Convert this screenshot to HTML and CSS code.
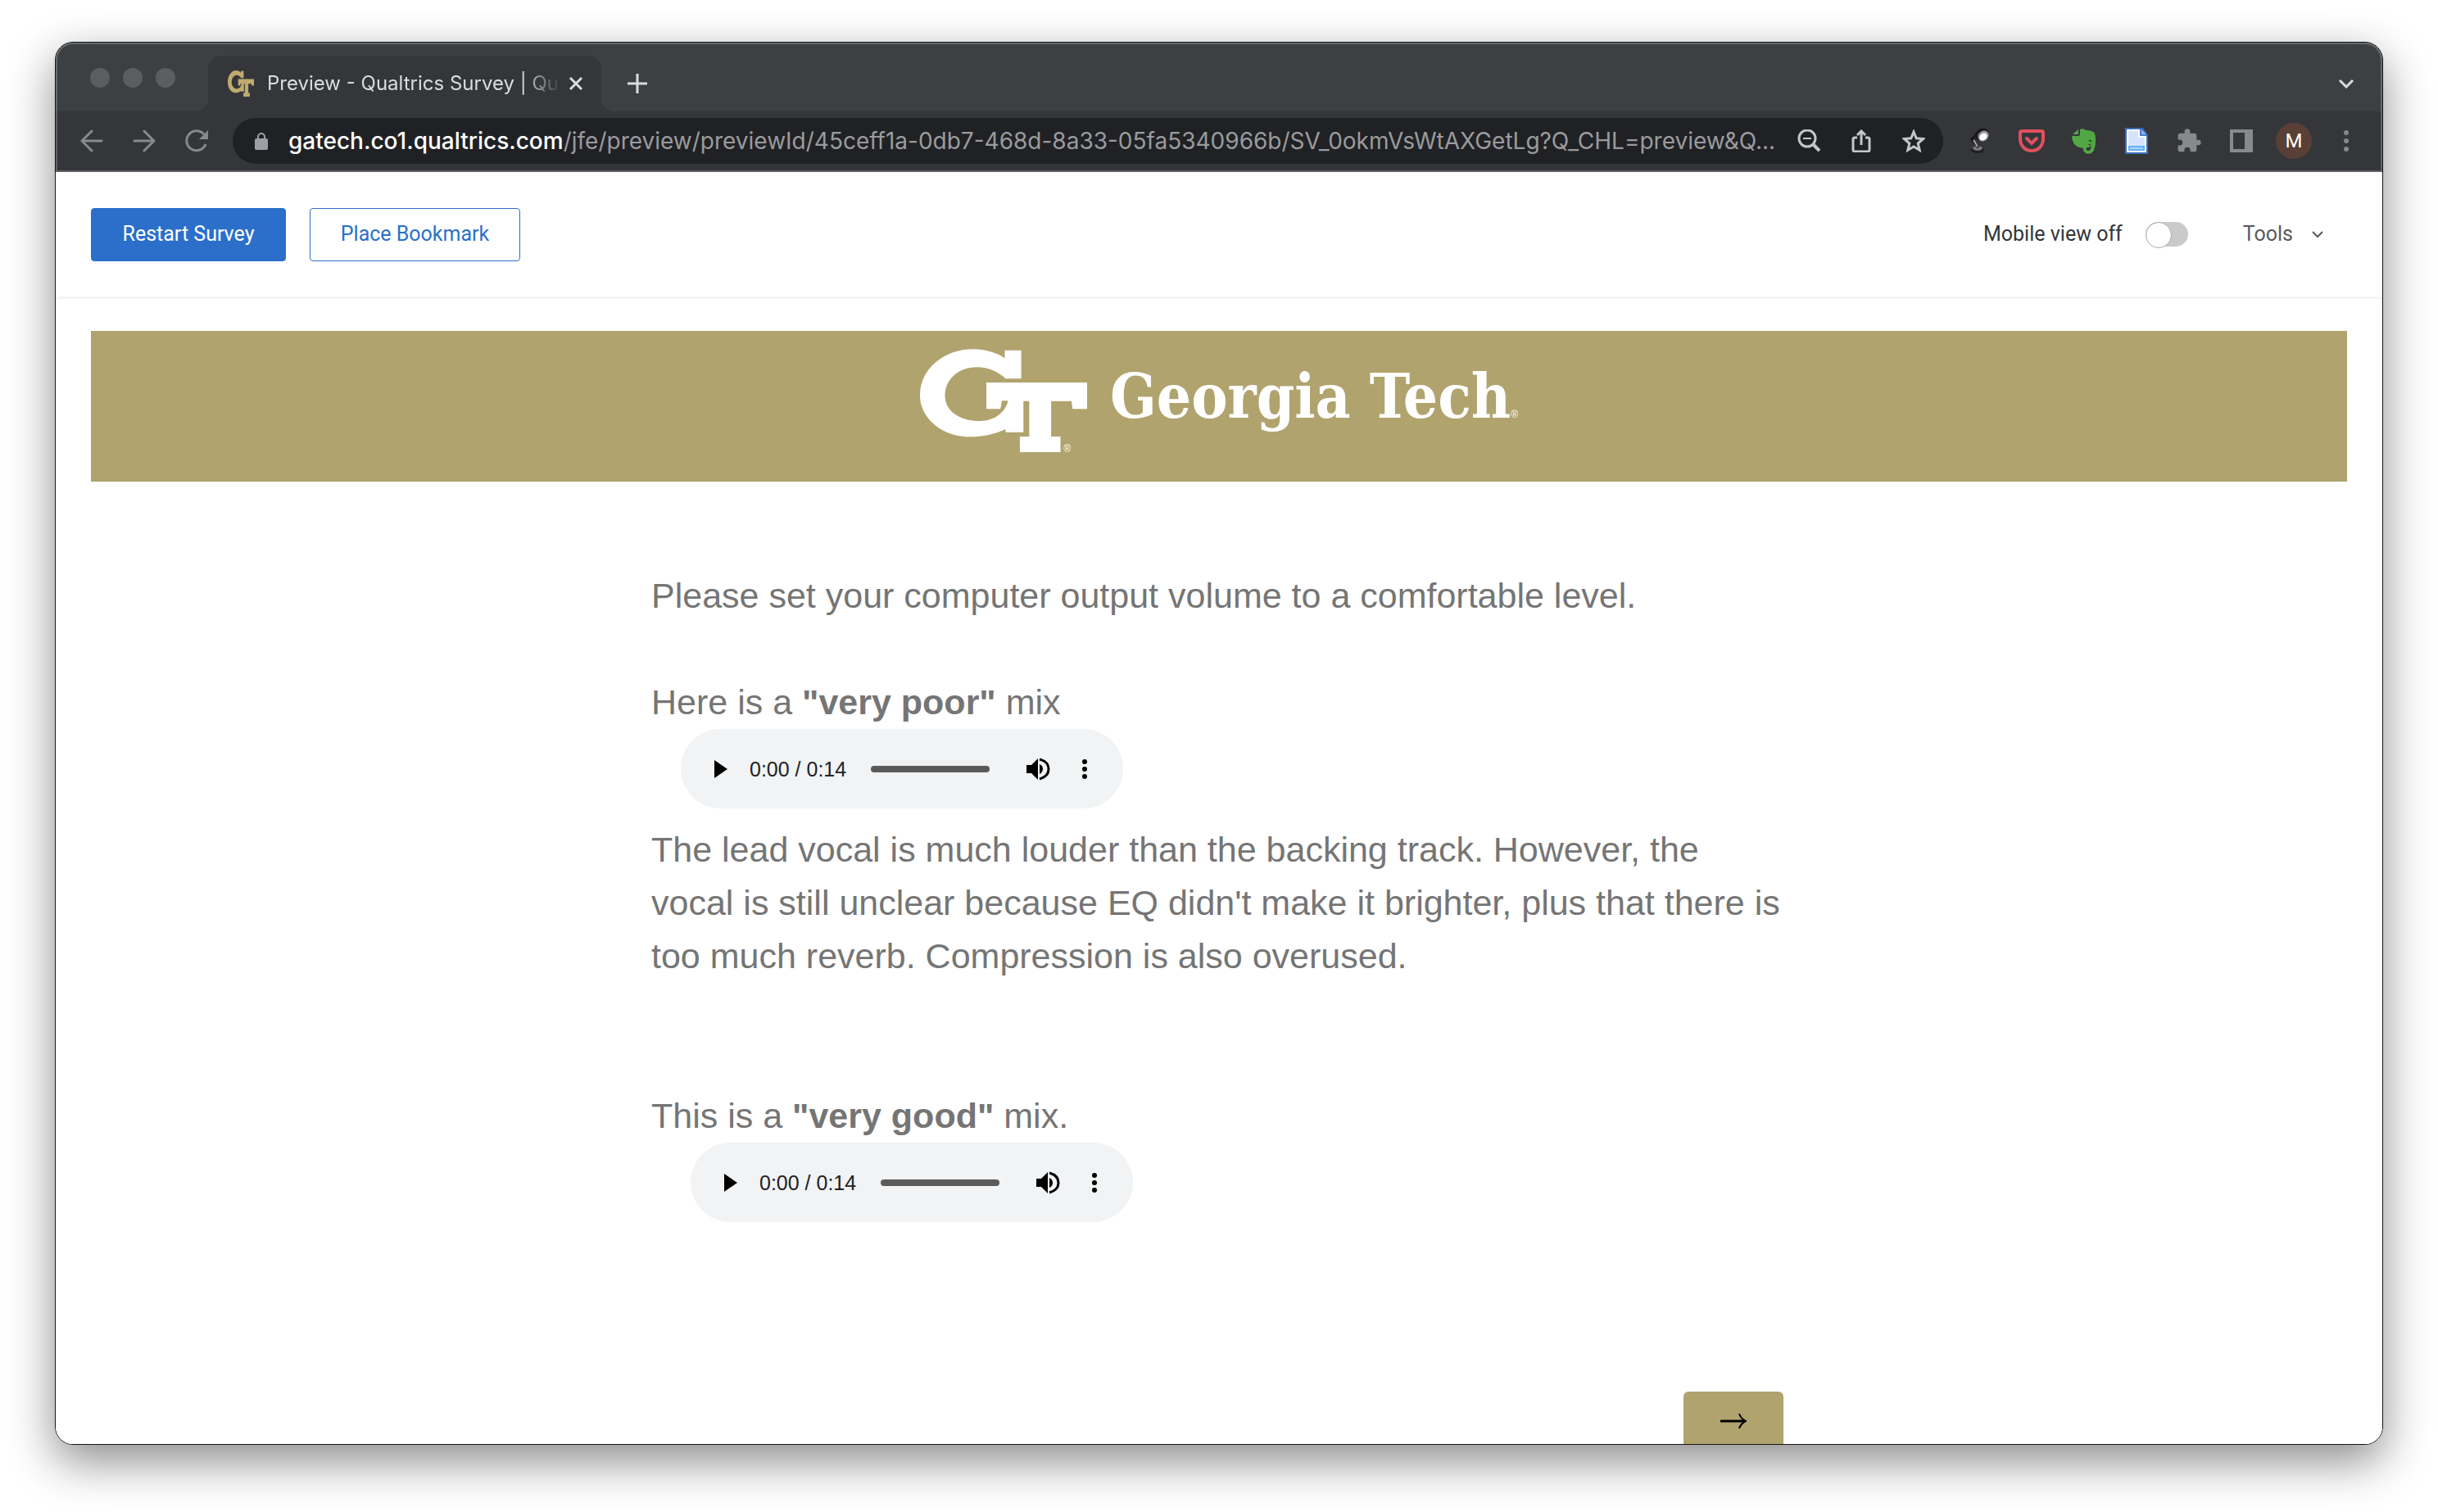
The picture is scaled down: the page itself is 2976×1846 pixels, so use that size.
FILE: index.html
```html
<!DOCTYPE html>
<html lang="en">
<head>
<meta charset="utf-8">
<title>Preview - Qualtrics Survey</title>
<link rel="stylesheet" href="styles.css">
</head>
<body>
<svg class="symbols" aria-hidden="true">
  <symbol id="gt" viewBox="0 0 609 378" preserveAspectRatio="none">
    <path d="M309 5H369V109H312C287 85 250 67 207 67C140 67 91 112 91 172C91 226 143 264 215 264C269 264 309 237 321 190H299L293 220H242V123H609V220H556L552 191H478V321H512V378H364V321H398V191H377V305H312V294C275 312 227 322 180 322C80 322 0 253 0 170C0 75 85 1 195 1C238 1 278 13 309 34Z"/>
  </symbol>
</svg>
<div class="window">
  <header class="chrome">
    <div class="tabstrip">
      <div class="lights"><i></i><i></i><i></i></div>
      <div class="tab">
        <svg class="favicon"><use href="#gt"/></svg>
        <span class="tab-title">Preview - Qualtrics Survey | Qu</span>
        <button class="bare" aria-label="Close tab"><svg width="18" height="18" viewBox="0 0 18 18" class="line"><path d="M2 2l14 14M16 2L2 16"/></svg></button>
      </div>
      <button class="bare new-tab" aria-label="New tab"><svg width="24" height="24" viewBox="0 0 24 24" class="line"><path d="M12 0v24M0 12h24"/></svg></button>
      <button class="bare tab-search" aria-label="Search tabs"><svg width="20" height="12" viewBox="0 0 20 12" class="line"><path d="M2 2l8 8 8-8"/></svg></button>
    </div>
    <div class="toolbar">
      <div class="nav">
        <button class="bare" aria-label="Back"><svg width="28" height="28" viewBox="0 0 28 28" class="line round"><path d="M26 14H2M14 2L2 14l12 12"/></svg></button>
        <button class="bare" aria-label="Forward"><svg width="28" height="28" viewBox="0 0 28 28" class="line round"><path d="M2 14h24M14 2l12 12-12 12"/></svg></button>
        <button class="bare" aria-label="Reload"><svg width="28" height="28" viewBox="0 0 28 28" class="line"><path d="M25 18A12 12 0 1 1 23 6"/><path d="M28 1v11H17z" fill="currentColor" stroke="none"/></svg></button>
      </div>
      <div class="omnibox">
        <svg class="lock" width="18" height="22" viewBox="0 0 18 22"><path d="M5 9V6a4 4 0 0 1 8 0v3" fill="none" stroke="#9aa0a6" stroke-width="2"/><rect x="1" y="8" width="16" height="14" rx="2" fill="#9aa0a6"/></svg>
        <span class="url"><b>gatech.co1.qualtrics.com</b>/jfe/preview/previewId/45ceff1a-0db7-468d-8a33-05fa5340966b/SV_0okmVsWtAXGetLg?Q_CHL=preview&amp;Q...</span>
        <div class="box-actions">
          <button class="bare" aria-label="Zoom"><svg width="28" height="28" viewBox="0 0 28 28" class="line"><circle cx="12" cy="11" r="10"/><path d="M7 11h10" stroke-width="2"/><path d="M19 18l8 8" stroke-width="4"/></svg></button>
          <button class="bare" aria-label="Share"><svg width="28" height="28" viewBox="0 0 28 28" class="line"><path d="M9 10H6q-2 0-2 2v13q0 2 2 2h16q2 0 2-2V12q0-2-2-2h-3M14 19V2M9 7l5-5 5 5"/></svg></button>
          <button class="bare" aria-label="Bookmark"><svg width="28" height="28" viewBox="0 0 28 28" class="line"><path d="M14 3l3.200 7.800 8.400.7-6.400 5.500 2 8.300L14 21l-7.200 4.300 2-8.300-6.400-5.500 8.400-.7z"/></svg></button>
        </div>
      </div>
      <div class="extensions">
        <svg width="32" height="32" viewBox="0 0 32 32"><ellipse cx="14" cy="27" rx="8" ry="4" fill="#1f1f1f"/><ellipse cx="14" cy="25" rx="6" ry="3" fill="#777"/><path d="M15 24L7 14l8-9" fill="none" stroke="#151515" stroke-width="3"/><path d="M14 23l-5-8" stroke="#aaa" stroke-width="2"/><ellipse cx="19" cy="8" rx="9" ry="7" fill="#1c1c1c" transform="rotate(-30 19 8)"/><ellipse cx="21" cy="10" rx="7" ry="6" fill="#999" transform="rotate(-40 21 10)"/><ellipse cx="21" cy="11" rx="5" ry="4" fill="#fff" transform="rotate(-40 21 11)"/></svg>
        <svg width="32" height="32" viewBox="0 0 32 32" fill="none" stroke="#e0505f" stroke-width="4" stroke-linecap="round"><path d="M4 4h24q2 0 2 2v7c0 10-7 15-14 15S2 23 2 13V6q0-2 2-2z"/><path d="M10 13l6 6 6-6"/></svg>
        <svg width="32" height="32" viewBox="0 0 32 32"><path fill="#51a744" d="M2 10h7q2 0 2-2V2q4-2 7 1 9 0 11 4c2 7 1 15-1 20-2 7-13 6-13-1 0-5 6-7 9-4l-2 2c-4-1-5 4-1 4 3 0 4-3 3-8-3-1-5 1-7 5-9 0-15-4-16-14z"/><path fill="#51a744" d="M2 8l7-6v5q0 1-1 1z"/><path fill="#35363a" d="M21 16q3-3 5 1z"/></svg>
        <svg width="32" height="32" viewBox="0 0 32 32"><path d="M3 1h20l6 8v22H3z" fill="#467ac9" stroke="#3c6dbd" stroke-width="2"/><path d="M4 2h16v8h8v20H4z" fill="#fff"/><path d="M6 4h12v8h8v16H6z" fill="#d5e4fc"/><path d="M6 22h20v6H6z" fill="#66b1f2"/><path d="M8 25h16" stroke="#a8d5ff" stroke-width="2"/><path d="M22 2v6h6z" fill="#8eb4e8"/></svg>
        <svg width="32" height="32" viewBox="0 0 24 24" fill="#88898b"><path d="M20.500 11H19V7c0-1.100-.9-2-2-2h-4V3.500a2.500 2.500 0 0 0-5 0V5H4c-1.100 0-2 .9-2 2v3.800h1.500a2.700 2.700 0 0 1 0 5.400H2V20c0 1.100.9 2 2 2h3.800v-1.500a2.700 2.700 0 0 1 5.400 0V22H17c1.100 0 2-.9 2-2v-4h1.500a2.500 2.500 0 0 0 0-5z"/></svg>
        <svg width="32" height="32" viewBox="0 0 32 32"><path fill="#88898b" fill-rule="evenodd" d="M2 2h28v28H2zM6 6v20h14V6z"/></svg>
        <button class="bare avatar">M</button>
        <svg width="32" height="32" viewBox="0 0 32 32" fill="#88898b"><circle cx="16" cy="6" r="3"/><circle cx="16" cy="16" r="3"/><circle cx="16" cy="26" r="3"/></svg>
      </div>
    </div>
  </header>

  <div class="preview-bar">
    <button class="btn primary">Restart Survey</button>
    <button class="btn outline">Place Bookmark</button>
    <label class="mobile">Mobile view off <input type="checkbox" class="switch"></label>
    <button class="bare tools">Tools <svg width="16" height="10" viewBox="0 0 16 10" class="line thin"><path d="M2 2l6 6 6-6"/></svg></button>
  </div>

  <main class="survey">
    <div class="banner">
      <div class="gt-mark">
        <svg class="gt-logo"><use href="#gt"/></svg>
        <span class="reg gt-reg">®</span>
      </div>
      <span class="wordmark">Georgia Tech<span class="reg">®</span></span>
    </div>
    <div class="question">
      <p>Please set your computer output volume to a comfortable level.</p>
      <p class="lead">Here is a <b>"very poor"</b> mix</p>
      <div class="player">
        <button class="bare" aria-label="Play"><svg width="18" height="22" viewBox="0 0 18 22"><path d="M1 0l16 11L1 22z"/></svg></button>
        <span class="time">0:00 / 0:14</span>
        <span class="track"></span>
        <button class="bare" aria-label="Mute"><svg width="30" height="28" viewBox="0 0 30 28"><path d="M1 9h6l8-8v26l-8-8H1z"/><path d="M17 8q4 2 4 6t-4 6z"/><path d="M17 2q11 3 11 12T17 26" fill="none" stroke="#000" stroke-width="3"/></svg></button>
        <button class="bare" aria-label="More"><svg width="8" height="26" viewBox="0 0 8 26"><circle cx="4" cy="4" r="3"/><circle cx="4" cy="13" r="3"/><circle cx="4" cy="22" r="3"/></svg></button>
      </div>
      <p class="note">The lead vocal is much louder than the backing track. However, the vocal is still unclear because EQ didn't make it brighter, plus that there is too much reverb. Compression is also overused.</p>
      <p class="second">This is a <b>"very good"</b> mix.</p>
      <div class="player shifted">
        <button class="bare" aria-label="Play"><svg width="18" height="22" viewBox="0 0 18 22"><path d="M1 0l16 11L1 22z"/></svg></button>
        <span class="time">0:00 / 0:14</span>
        <span class="track"></span>
        <button class="bare" aria-label="Mute"><svg width="30" height="28" viewBox="0 0 30 28"><path d="M1 9h6l8-8v26l-8-8H1z"/><path d="M17 8q4 2 4 6t-4 6z"/><path d="M17 2q11 3 11 12T17 26" fill="none" stroke="#000" stroke-width="3"/></svg></button>
        <button class="bare" aria-label="More"><svg width="8" height="26" viewBox="0 0 8 26"><circle cx="4" cy="4" r="3"/><circle cx="4" cy="13" r="3"/><circle cx="4" cy="22" r="3"/></svg></button>
      </div>
      <button class="next" aria-label="Next"><svg width="32" height="22" viewBox="0 0 32 22"><path d="M0 11h30" stroke="#000" stroke-width="3"/><path d="M23 2q2 6 8 9-6 3-8 9" fill="none" stroke="#000" stroke-width="2"/></svg></button>
    </div>
  </main>
</div>
</body>
</html>
```
FILE: styles.css
```css
* { box-sizing: border-box; }
body { margin: 0; height: 100vh; padding: 51px 67px 82px; background: #fff; font-family: "Liberation Sans", Arial, sans-serif; }
p { margin: 0; }
svg { display: block; flex: none; }
.symbols { position: absolute; width: 0; height: 0; }
.bare { background: none; border: 0; padding: 0; color: inherit; font: inherit; display: flex; align-items: center; justify-content: center; flex: none; }
.line { fill: none; stroke: currentColor; stroke-width: 3; }
.thin { stroke-width: 2; }
.round { stroke-linecap: round; }

.window {
  height: 100%;
  display: flex; flex-direction: column;
  border: 1px solid #151515; border-radius: 22px;
  overflow: hidden;
  box-shadow: 0 20px 56px rgba(0,0,0,.46);
}

.chrome { position: relative; flex: none; background: #35363a; color: #dadce0; }
.chrome::after { content: ""; position: absolute; inset: 0; border: 2px solid rgba(255,255,255,.22); border-radius: 21px 21px 0 0; pointer-events: none; }
.tabstrip { height: 84px; background: #3c4043; display: flex; align-items: stretch; }
.lights { width: 186px; padding: 31px 0 0 42px; display: flex; gap: 16px; }
.lights i { width: 24px; height: 24px; border-radius: 50%; background: #5b5e61; }
.tab { position: relative; width: 480px; margin-top: 16px; padding: 0 22px 0 24px; background: #35363a; border-radius: 16px 16px 0 0; display: flex; align-items: center; }
.tab::before, .tab::after { content: ""; position: absolute; bottom: 0; width: 16px; height: 16px; }
.tab::before { right: 100%; background: radial-gradient(circle at 0 0, transparent 16px, #35363a 16px); }
.tab::after { left: 100%; background: radial-gradient(circle at 100% 0, transparent 16px, #35363a 16px); }
.favicon { width: 32px; height: 32px; fill: #bfab6d; }
.tab-title { flex: 1; margin: 0 8px 0 16px; font: 24px/32px Inter, sans-serif; white-space: nowrap; -webkit-mask: linear-gradient(to left, transparent, #000 50px); mask: linear-gradient(to left, transparent, #000 50px); }
.new-tab { margin: 16px 0 0 32px; }
.tab-search { margin: 16px 34px 0 auto; }

.toolbar { height: 74px; padding-bottom: 2px; display: flex; align-items: center; }
.nav { width: 216px; padding-left: 30px; display: flex; gap: 36px; color: #88898b; }
.omnibox { flex: 1; min-width: 0; height: 56px; padding: 0 22px 0 26px; border-radius: 28px; background: #202124; display: flex; align-items: center; color: #c5c6c8; }
.url { flex: 1; min-width: 0; margin: 0 20px 0 24px; font: 28px/36px Inter, sans-serif; white-space: nowrap; overflow: hidden; color: #9a9b9e; }
.url b { font-weight: 500; color: #fff; }
.box-actions { display: flex; gap: 36px; }
.extensions { padding: 0 28px; display: flex; align-items: center; gap: 32px; }
.avatar { width: 44px; height: 44px; margin: 0 -6px; border-radius: 50%; background: #5a3f37; color: #fff; font: 24px/44px Roboto, sans-serif; }

.preview-bar { flex: none; height: 155px; padding: 0 71px 0 43px; display: flex; align-items: center; border-bottom: 3px solid #f4f4f4; font: 25px/36px Roboto, sans-serif; color: #32363a; }
.btn { height: 65px; border-radius: 4px; font: inherit; border: 1px solid #2b6fcb; }
.primary { width: 238px; background: #2b6fcb; color: #fff; }
.outline { width: 257px; margin-left: 29px; background: #fff; color: #2b6fcb; }
.mobile { margin-left: auto; display: flex; align-items: center; gap: 28px; }
.switch { appearance: none; width: 52px; height: 30px; margin: 0; border-radius: 15px; background: #cacaca; }
.switch::before { content: ""; display: block; width: 30px; height: 30px; border-radius: 50%; border: 1px solid #aaa; background: #fff; }
.tools { margin-left: 67px; gap: 22px; color: #555a60; }

.survey { flex: 1; min-height: 0; overflow: hidden; padding: 39px 43px 0; background: #fff; }
.banner { height: 184px; background: #b0a36e; color: #fff; fill: #fff; display: flex; justify-content: center; align-items: flex-start; gap: 28px; padding-top: 22px; }
.gt-mark { position: relative; }
.gt-logo { width: 204px; height: 126px; }
.reg { font: 12px/12px "Liberation Sans", sans-serif; }
.gt-reg { position: absolute; right: 20px; bottom: -2px; }
.wordmark { font: 700 74px/116px "DejaVu Serif Condensed", "DejaVu Serif", serif; }

.question { width: 1386px; margin: 107px auto 0; font-size: 43px; line-height: 65px; color: #757575; }
.lead { margin-top: 65px; }
.player { width: 540px; height: 97px; margin-left: 36px; padding: 0 43px 0 40px; border-radius: 49px; background: #f1f3f4; display: flex; align-items: center; }
.shifted { margin-left: 48px; }
.time { margin: 0 30px 0 26px; font-size: 25px; line-height: 32px; color: #202124; white-space: nowrap; }
.track { flex: 1; height: 8px; margin-right: 44px; border-radius: 4px; background: #5a5a5a; }
.player .bare + .bare { margin-left: 38px; }
.note { margin-top: 18px; }
.second { margin-top: 130px; }
.next { width: 122px; height: 80px; margin: 207px 4px 0 auto; display: flex; align-items: flex-start; justify-content: center; padding: 25px 0 0; border: 0; border-radius: 6px; background: #b0a36e; }
```
